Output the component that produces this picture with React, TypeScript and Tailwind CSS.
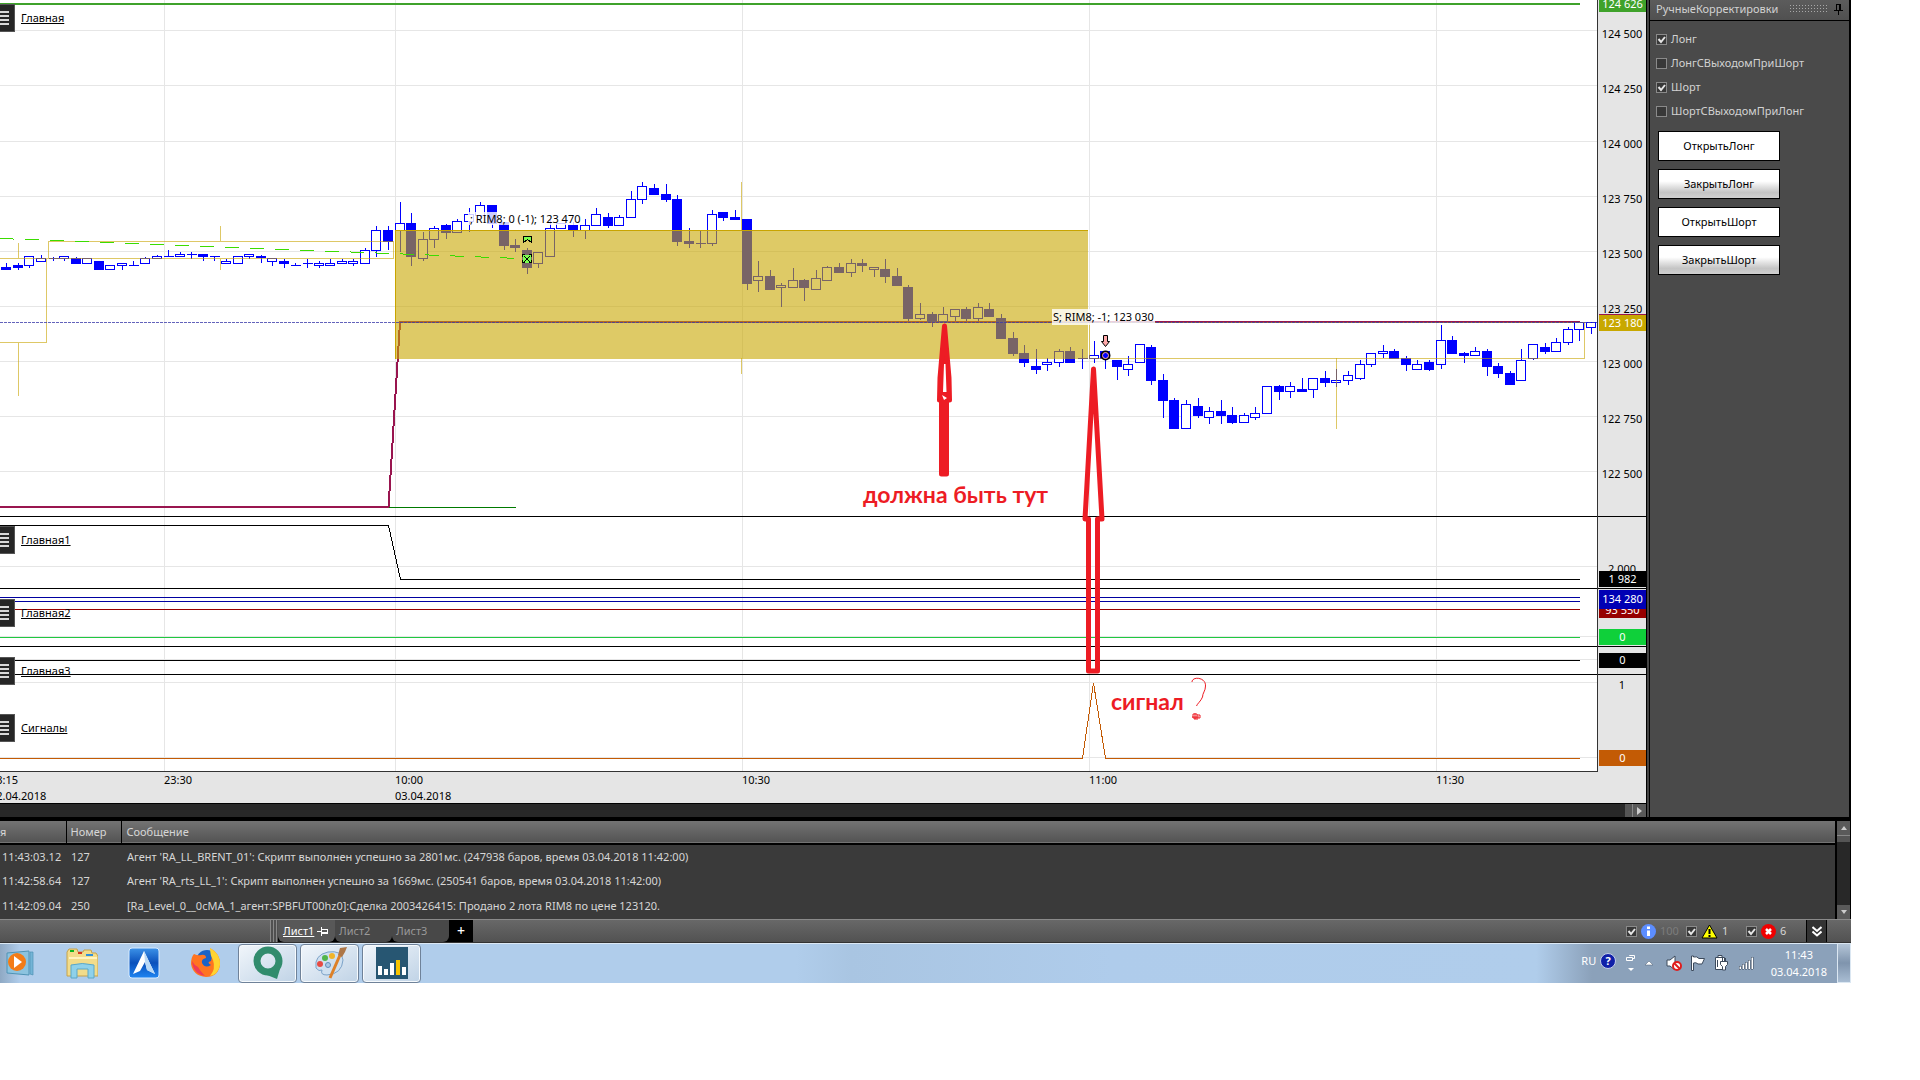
import { useState } from "react"
import type { ReactNode } from "react"
import clsx from "clsx"

// high, body top, body bottom, low, filled
type Candle = [number, number, number, number, number]

const FIRST_INDEX = -35
const STEP = 347 / 30

const candles: Candle[] = [
  [267, 267, 272, 272, 1], [263, 267, 269, 269, 1], [263, 265, 267, 269, 1], [256, 256, 265, 267, 0],
  [255, 258, 261, 261, 0], [257, 258, 258, 260, 0], [256, 256, 258, 260, 0], [257, 258, 263, 263, 1],
  [258, 258, 263, 263, 0], [261, 261, 269, 269, 1], [265, 265, 269, 269, 0], [263, 263, 265, 269, 0],
  [261, 265, 265, 265, 0], [257, 258, 263, 263, 0], [255, 256, 258, 258, 0], [250, 256, 256, 256, 0],
  [252, 254, 256, 256, 0], [252, 254, 254, 258, 0], [254, 254, 256, 260, 1], [256, 256, 256, 260, 0],
  [259, 261, 263, 263, 0], [256, 256, 263, 263, 0], [254, 254, 256, 258, 0], [255, 256, 257, 262, 1],
  [258, 258, 261, 265, 0], [259, 261, 263, 267, 1], [263, 265, 265, 265, 0], [259, 263, 263, 267, 0],
  [261, 263, 265, 267, 0], [259, 263, 265, 265, 0], [259, 261, 263, 263, 0], [259, 261, 263, 265, 0],
  [248, 250, 263, 263, 0], [226, 230, 250, 256, 0], [226, 230, 241, 249, 1],
  [202, 223, 230, 251, 0], [213, 223, 256, 265, 1], [232, 239, 258, 260, 0], [226, 228, 239, 247, 0],
  [224, 225, 232, 238, 1], [219, 221, 232, 232, 0], [208, 214, 221, 231, 0], [202, 205, 215, 215, 0],
  [205, 205, 223, 227, 1], [222, 222, 245, 249, 1], [239, 245, 247, 251, 1], [248, 250, 267, 273, 1],
  [252, 252, 263, 267, 0], [217, 228, 256, 256, 0], [223, 223, 228, 228, 0], [222, 225, 230, 236, 1],
  [219, 225, 230, 238, 0], [208, 214, 225, 225, 0], [213, 217, 225, 227, 1], [215, 217, 225, 225, 0],
  [191, 199, 217, 217, 0], [182, 186, 199, 203, 0], [184, 188, 194, 194, 1], [184, 194, 199, 201, 1],
  [195, 199, 241, 245, 1], [228, 241, 243, 247, 1], [230, 243, 243, 247, 0], [210, 214, 243, 245, 0],
  [212, 212, 217, 220, 1], [210, 217, 219, 219, 1],
  [219, 219, 283, 289, 1], [261, 276, 280, 291, 0], [270, 276, 289, 289, 1], [283, 285, 287, 306, 0],
  [268, 280, 287, 287, 0], [279, 280, 287, 300, 1], [270, 278, 289, 289, 0], [266, 267, 280, 280, 0],
  [263, 267, 272, 272, 1], [259, 263, 272, 276, 0], [259, 263, 265, 271, 1], [267, 267, 269, 276, 0],
  [259, 269, 276, 282, 1], [268, 276, 285, 285, 1], [285, 287, 318, 320, 1], [303, 314, 318, 319, 0],
  [312, 314, 321, 326, 1], [307, 314, 321, 321, 0], [309, 309, 316, 320, 0], [307, 309, 318, 320, 1],
  [303, 307, 318, 320, 0], [303, 309, 316, 316, 1], [314, 318, 338, 338, 1], [332, 338, 353, 355, 1],
  [345, 353, 362, 366, 1], [349, 366, 369, 373, 1], [358, 362, 364, 370, 0], [349, 351, 362, 366, 0],
  [347, 351, 362, 362, 1], [349, 358, 358, 368, 0],
  [341, 355, 358, 362, 0], [351, 351, 358, 368, 1], [360, 360, 366, 379, 1], [356, 364, 369, 375, 0],
  [344, 344, 362, 362, 0], [345, 347, 380, 384, 1], [374, 380, 400, 417, 1], [398, 400, 428, 428, 1],
  [400, 404, 428, 428, 0], [398, 406, 415, 417, 1], [407, 411, 417, 423, 0], [400, 411, 415, 423, 1],
  [407, 415, 422, 423, 1], [413, 415, 422, 422, 0], [407, 413, 417, 419, 0], [386, 386, 413, 413, 0],
  [385, 386, 391, 399, 1], [382, 386, 391, 397, 0], [378, 389, 391, 391, 1], [378, 378, 389, 397, 0],
  [371, 378, 382, 386, 1], [369, 380, 382, 386, 0], [371, 375, 380, 384, 0], [360, 364, 378, 379, 0],
  [353, 353, 364, 366, 0], [345, 351, 353, 357, 0], [349, 351, 358, 358, 1], [356, 358, 364, 370, 1],
  [360, 364, 369, 369, 0], [360, 362, 369, 370, 1],
  [325, 340, 364, 368, 0], [336, 340, 353, 353, 1], [352, 353, 355, 362, 1], [347, 351, 355, 355, 0],
  [349, 351, 366, 375, 1], [363, 366, 373, 377, 1], [371, 373, 384, 384, 1], [349, 360, 380, 380, 0],
  [344, 344, 358, 359, 0], [343, 347, 351, 353, 1], [338, 342, 351, 351, 0], [327, 329, 342, 344, 0],
  [322, 322, 329, 340, 0], [322, 322, 327, 333, 0],
]

const priceTicks = [
  "124 500", "124 250", "124 000", "123 750", "123 500", "123 250", "123 000", "122 750", "122 500",
]

const log = [
  { time: "11:43:03.12", num: 127, text: "Агент 'RA_LL_BRENT_01': Скрипт выполнен успешно за 2801мс. (247938 баров, время 03.04.2018 11:42:00)" },
  { time: "11:42:58.64", num: 127, text: "Агент 'RA_rts_LL_1': Скрипт выполнен успешно за 1669мс. (250541 баров, время 03.04.2018 11:42:00)" },
  { time: "11:42:09.04", num: 250, text: "[Ra_Level_0__0cMA_1_агент:SPBFUT00hz0]:Сделка 2003426415: Продано 2 лота RIM8 по цене 123120." },
]

function Candles() {
  return (
    <g stroke="#0000ff">
      {candles.map(([high, top, bottom, low, filled], i) => {
        const x = Math.floor(400 + (i + FIRST_INDEX) * STEP) + 0.5
        return (
          <g key={i}>
            <path d={`M${x} ${high}V${low + 1}`} />
            {top === bottom ? (
              <path d={`M${x - 5} ${top + 0.5}h10`} />
            ) : (
              <rect x={x - 5} y={top + 0.5} width={9} height={bottom - top} fill={filled ? "#0000ff" : "#fff"} />
            )}
          </g>
        )
      })}
    </g>
  )
}

function ChartCanvas() {
  const priceGrid = [30, 85, 141, 196, 251, 306, 361, 416, 471, 566, 636, 659, 682, 757]
  return (
    <svg
      className="absolute inset-0 h-full w-full"
      viewBox="0 0 1597 771"
      preserveAspectRatio="xMinYMin slice"
      fill="none"
      shapeRendering="crispEdges"
    >
      <g stroke="#e6e6e6">
        {priceGrid.map((y) => (
          <path key={y} d={`M0 ${y + 0.5}H1597`} />
        ))}
        {[164, 395, 742, 1089, 1436].map((x) => (
          <path key={x} d={`M${x}.5 0V771`} />
        ))}
      </g>

      <path d="M0 4H1580" stroke="#3fa22b" strokeWidth={2} />
      <path d="M388 507.5H516" stroke="#007a00" />
      <path d="M0 507H388.5L400 322H1580" stroke="#99154f" strokeWidth={2} />
      <Candles />

      {/* higher timeframe bars */}
      <g stroke="#c8a400" strokeOpacity={0.6}>
        <path d="M0 258.5H393.5V241.5H48.5V258.5M46.5 258.5V342.5H0" />
        <path d="M18.5 243V258M18.5 343V396M220.5 226V241M220.5 259V270" />
        <path d="M741.5 182V231M741.5 358V374M1336.5 358V429" />
        <path d="M1089.5 322.5V358.5H1584.5V322.5H1089" />
      </g>
      <rect x={395} y={230} width={693} height={129} fill="#c8a700" fillOpacity={0.6} />
      <path d="M395.5 359V230.5H1088" stroke="#c8a400" />

      <path d="M0 322.5H1597" stroke="#3c3caa" strokeOpacity={0.8} strokeDasharray="3 1" />
      <path d="M0 238.5L520 258.5" stroke="#3bdc00" strokeDasharray="14 11" />

      {/* indicator panes */}
      <path d="M0 525.5H388.5L400.5 579.5H1580M0 660.5H1580" stroke="#000" />
      <path d="M0 597.5H1580M0 601.5H1580" stroke="#0000a0" />
      <path d="M0 609.5H1580" stroke="#960000" />
      <path d="M0 637.5H1580" stroke="#1fc840" />
      <path d="M0 758.5H1082.5L1093.5 683L1105.5 758.5H1580" stroke="#c35b05" />

      {/* trade markers */}
      <path d="M523.5 242.5V236.5H531.5V242.5L527.5 239.5Z" fill="#7dff50" stroke="#000" />
      <rect x={523} y={255} width={8} height={8} fill="#7dff50" />
      <path d="M522.5 257V254.5H525M529 254.5H531.5V257M531.5 260V262.5H529M525 262.5H522.5V260" stroke="#000" />
      <path d="M524 256L530 262M530 256L524 262" stroke="#000" />
      <g shapeRendering="auto">
        <path d="M1103.5 335.5H1107.5V341.5H1109.5L1105.5 346.5L1101.5 341.5H1103.5Z" fill="#ffaaaa" stroke="#000" />
        <circle cx={1105.5} cy={355.5} r={4} stroke="#000" strokeWidth={2} />
        <circle cx={1105.5} cy={355.5} r={3} stroke="#ffaaaa" />
      </g>
    </svg>
  )
}

function Annotations() {
  return (
    <svg
      className="pointer-events-none absolute inset-0 h-full w-full"
      viewBox="0 0 1597 771"
      preserveAspectRatio="xMinYMin slice"
      fill="none"
      stroke="#ed1c24"
      strokeLinejoin="round"
    >
      <path d="M944.5 326L940 378L939.5 400H949.5L949 378ZM941.5 402H946.5V474H941.5Z" fill="#ed1c24" strokeWidth={5} />
      <path d="M944 364L943 392H946.5L945.5 364ZM942 395L947 398L944 400Z" fill="#fff" stroke="none" />
      <path d="M1093.5 369L1085 519H1088.5V671H1097.5V519H1102Z" strokeWidth={5} />
      <path d="M1192 682C1192 676 1206 677 1205.500 686C1205.500 691 1202.500 693 1202.500 697C1201 701 1197 704 1196.500 706" />
      <path d="M1193 714H1197V718H1193ZM1195 713V719M1192 717H1199M1197 715H1200V718H1197M1194 719H1198" />
      <g fill="#ed1c24" stroke="none" className="font-['Lato','Open_Sans',sans-serif] text-[23px] font-bold">
        <text x={863} y={503}>должна быть тут</text>
        <text x={1111} y={710}>сигнал</text>
      </g>
    </svg>
  )
}

function Pane({ title, className }: { title: string; className: string }) {
  return (
    <div className={clsx("relative flex items-start border-b border-black", className)}>
      <button aria-label={`Меню ${title}`} className="flex h-7 w-[15px] shrink-0 flex-col justify-center gap-[2px] border border-l-0 border-[#555] bg-[#262626]">
        <span className="h-[2px] w-[9px] bg-[#d8d8d8]" />
        <span className="h-[2px] w-[9px] bg-[#d8d8d8]" />
        <span className="h-[2px] w-[9px] bg-[#d8d8d8]" />
        <span className="h-[2px] w-[9px] bg-[#d8d8d8]" />
      </button>
      <a href="#" className="ml-1.5 leading-7 text-black underline">{title}</a>
    </div>
  )
}

function AxisTag({ className, children }: { className: string; children: ReactNode }) {
  return <div className={clsx("absolute inset-x-0 ml-px flex items-center justify-center overflow-hidden text-white", className)}>{children}</div>
}

function Check({ label, on, className, children }: { label: string; on: boolean; className?: string; children?: ReactNode }) {
  const [checked, setChecked] = useState(on)
  return (
    <label className={clsx("flex items-center", className)}>
      <span className="relative flex">
        <input
          type="checkbox"
          aria-label={label}
          checked={checked}
          onChange={(e) => setChecked(e.target.checked)}
          className="h-[11px] w-[11px] appearance-none border border-[#8a8a8a] bg-[#383838]"
        />
        {checked && (
          <svg className="pointer-events-none absolute inset-0" width="11" height="11" fill="none" stroke="#e6e6e6" strokeWidth="2">
            <path d="M2.500 5L5 8L9 3" />
          </svg>
        )}
      </span>
      {children}
    </label>
  )
}

function Pin({ className }: { className?: string }) {
  return (
    <svg className={className} width="9" height="11" fill="none" stroke="currentColor" shapeRendering="crispEdges">
      <path d="M2.500 6V0.500H6.500V6M5.500 1V6M0 6.500H9M4.500 7V11" />
    </svg>
  )
}

function SidePanel() {
  return (
    <aside className="flex w-[201px] shrink-0 flex-col border-r-2 border-black bg-[#4a4a4a] text-[#d2d2d2]">
      <header className="flex h-[21px] items-center border-b border-black bg-linear-to-b from-[#5c5c5c] to-[#505050] pb-0.5 pl-1.5">
        <span>РучныеКорректировки</span>
        <svg className="mr-1.5 ml-auto" width="38" height="8" shapeRendering="crispEdges">
          <path d="M0 .5H38M0 3.500H38M0 6.500H38" stroke="#a8a8a8" strokeDasharray="1 2" />
        </svg>
        <Pin className="mr-1.5 text-black" />
      </header>
      <div className="flex flex-col pt-1.5 pl-1.5">
        <Check on label="Лонг" className="h-6 gap-1"><span>Лонг</span></Check>
        <Check on={false} label="ЛонгСВыходомПриШорт" className="h-6 gap-1"><span>ЛонгСВыходомПриШорт</span></Check>
        <Check on label="Шорт" className="h-6 gap-1"><span>Шорт</span></Check>
        <Check on={false} label="ШортСВыходомПриЛонг" className="h-6 gap-1"><span>ШортСВыходомПриЛонг</span></Check>
      </div>
      <div className="flex flex-col items-start gap-2 pt-2 pl-2 text-black">
        <button className="h-[30px] w-[122px] border border-black bg-white">ОткрытьЛонг</button>
        <button className="h-[30px] w-[122px] border border-black bg-linear-to-b from-white from-40% via-[#c4c4c4] via-80% to-[#d0d0d0]">ЗакрытьЛонг</button>
        <button className="h-[30px] w-[122px] border border-black bg-white">ОткрытьШорт</button>
        <button className="h-[30px] w-[122px] border border-black bg-linear-to-b from-white from-40% via-[#c4c4c4] via-80% to-[#d0d0d0]">ЗакрытьШорт</button>
      </div>
    </aside>
  )
}

function Chart() {
  return (
    <div className="flex min-w-0 flex-1 flex-col bg-[#e5e5e5]">
      <div className="flex">
        <div className="relative min-w-0 flex-1 border-r border-b border-[#333] bg-white">
          <ChartCanvas />
          <Pane title="Главная" className="h-[517px] pt-1" />
          <Pane title="Главная1" className="h-[72px] pt-[9px]" />
          <Pane title="Главная2" className="h-[58px] pt-[10px]" />
          <Pane title="Главная3" className="h-[28px] pt-[10px]" />
          <Pane title="Сигналы" className="h-[96px] border-b-0 pt-[39px]" />
          <span className="absolute top-[212px] left-[468px] bg-white/80 px-0.5 leading-[13px] whitespace-nowrap text-black">; RIM8; 0 (-1); 123 470</span>
          <span className="absolute top-[309px] left-[1052px] bg-white/80 px-px leading-4 whitespace-nowrap text-black">S; RIM8; -1; 123 030</span>
          <Annotations />
        </div>

        {/* value axis */}
        <div className="w-[48px] shrink-0 text-center text-black">
          <div className="relative h-[517px] border-b border-black pt-[6px]">
            {priceTicks.map((tick) => (
              <div key={tick} className="h-[55px] leading-[55px]">{tick}</div>
            ))}
            <AxisTag className="-top-1 h-4 bg-[#3fa22b]">124 626</AxisTag>
            <AxisTag className="top-[314px] h-[17px] border-t border-[#99154f] bg-[#c8a800]">123 180</AxisTag>
          </div>
          <div className="relative h-[72px] border-b border-black pt-11">
            <div className="leading-4">2 000</div>
            <AxisTag className="top-[54px] h-4 bg-black">1 982</AxisTag>
          </div>
          <div className="relative h-[58px] border-b border-black">
            <AxisTag className="top-[13px] h-4 bg-[#960000]">93 550</AxisTag>
            <AxisTag className="top-px h-[19px] bg-[#0000b4]">134 280</AxisTag>
            <AxisTag className="top-10 h-4 bg-[#0fd03a]">0</AxisTag>
          </div>
          <div className="relative h-[28px] border-b border-black">
            <AxisTag className="top-1.5 h-[15px] bg-black">0</AxisTag>
          </div>
          <div className="relative h-[97px] pt-0.5">
            <div className="leading-4">1</div>
            <AxisTag className="top-[75px] h-4 bg-[#c35b05]">0</AxisTag>
          </div>
        </div>
      </div>

      {/* time axis */}
      <div className="flex h-[31px] overflow-hidden leading-4 text-black">
        <div className="w-[164px] shrink-0"><div className="-ml-2.5">23:15<br />02.04.2018</div></div>
        <div className="w-[231px] shrink-0">23:30</div>
        <div className="w-[347px] shrink-0">10:00<br />03.04.2018</div>
        <div className="w-[347px] shrink-0">10:30</div>
        <div className="w-[347px] shrink-0">11:00</div>
        <div>11:30</div>
      </div>

      <div className="flex h-3.5 justify-end border-t border-black bg-[#282828]">
        <div className="w-2 border-r border-[#888] bg-[#555]" />
        <button aria-label="Вправо" className="flex w-[13px] items-center justify-center bg-[#5a5a5a]">
          <svg width="5" height="8" fill="#ccc"><path d="M0 0L5 4L0 8Z" /></svg>
        </button>
      </div>
    </div>
  )
}

function MessageLog() {
  return (
    <div className="flex border-t-4 border-r border-black bg-[#3a3a3a] text-[#d6d6d6]">
      <table className="min-w-0 flex-1 table-fixed border-collapse text-left">
        <thead>
          <tr className="h-[23px] border-b-2 border-black bg-linear-to-b from-[#737373] to-[#545454]">
            <th className="w-[66px] border-r border-black p-0 font-normal">я</th>
            <th className="w-[55px] border-r border-black p-0 pl-1 font-normal">Номер</th>
            <th className="p-0 pl-[5px] font-normal">Сообщение</th>
          </tr>
        </thead>
        <tbody>
          {log.map((row) => (
            <tr key={row.time} className="h-[25px]">
              <td className="p-0 pl-0.5 whitespace-nowrap">{row.time}</td>
              <td className="p-0 pl-[5px]">{row.num}</td>
              <td className="p-0 pl-1.5">{row.text}</td>
            </tr>
          ))}
        </tbody>
      </table>
      <div className="flex w-[15px] shrink-0 flex-col border-l-2 border-black bg-[#282828]">
        <button aria-label="Вверх" className="flex h-3.5 items-center justify-center bg-[#5a5a5a]">
          <svg width="6" height="4" fill="#ccc"><path d="M0 4L3 0L6 4Z" /></svg>
        </button>
        <div className="h-[7px] border-t border-[#888] bg-[#555]" />
        <button aria-label="Вниз" className="mt-auto flex h-3.5 items-center justify-center bg-[#5a5a5a]">
          <svg width="6" height="4" fill="#ccc"><path d="M0 0L3 4L6 0Z" /></svg>
        </button>
      </div>
    </div>
  )
}

function SheetBar() {
  return (
    <div className="flex h-6 items-stretch border-t border-b border-t-[#8a8a8a] border-b-[#333] bg-linear-to-b from-[#686868] to-[#525252]">
      <div className="ml-[270px] w-2 bg-[repeating-linear-gradient(90deg,#888_0_1px,#505050_1px_3px)]" />
      <nav className="flex bg-black">
        <button className="flex w-[57px] items-center gap-1 rounded-b-md bg-[#585858] pl-[5px] text-white">
          <span className="underline">Лист1</span>
          <Pin className="rotate-90" />
        </button>
        <button className="w-[57px] rounded-b-md bg-[#484848] pl-1 text-left text-[#9a9a9a]">Лист2</button>
        <button className="w-[57px] rounded-b-md bg-[#484848] pl-1 text-left text-[#9a9a9a]">Лист3</button>
        <button className="w-6 bg-black text-sm leading-none font-medium text-white">+</button>
      </nav>
      <div className="ml-auto flex items-center text-[#d6d6d6]">
        <Check on label="Информация" className="w-[60px] gap-1">
          <svg width="15" height="15"><circle cx="7.500" cy="7.500" r="7.500" fill="#5c8dff" /><path d="M7.500 2.500V5M7.500 6.500V12" stroke="#fff" strokeWidth="3" /></svg>
          <span className="text-[#7c7c7c]">100</span>
        </Check>
        <Check on label="Предупреждения" className="w-[60px] gap-1">
          <svg width="17" height="15"><path d="M8.500 1L16 14H1Z" fill="#ffff00" stroke="#000" /><path d="M8.500 5V10M8.500 11V13" stroke="#000" strokeWidth="2" /></svg>
          <span>1</span>
        </Check>
        <Check on label="Ошибки" className="w-[60px] gap-1">
          <svg width="15" height="15"><circle cx="7.500" cy="7.500" r="7.500" fill="#f00000" /><path d="M5 5L10 10M10 5L5 10" stroke="#fff" strokeWidth="2.500" /></svg>
          <span>6</span>
        </Check>
      </div>
      <button aria-label="Свернуть" className="mr-6 flex w-[21px] items-center justify-center border-x border-black bg-[#333]">
        <svg width="10" height="11" fill="none" stroke="#fff" strokeWidth="2"><path d="M.5 1L5 5L9.500 1M.5 5.500L5 9.500L9.500 5.500" /></svg>
      </button>
    </div>
  )
}

function Taskbar() {
  const open = "flex h-[39px] w-[59px] items-center justify-center rounded-sm border border-[#6f8299] bg-linear-to-br from-[#f1f6fb] to-[#c0d3e6] shadow-[inset_0_0_0_1px_#f6fafd]"
  return (
    <footer className="flex h-10 items-center bg-[linear-gradient(90deg,#8fa9c4_0,#b0cdeb_20px,#b0cdeb_43%,#a9c5e2_46%,#afcceb_60%,#b0cdeb_83%,#8ba1ba_86%)] text-white shadow-[inset_0_1px_0_#dce9f5]">
      <div className="flex flex-1 items-center">
        <button aria-label="Проигрыватель" className="ml-1 flex w-8 justify-center">
          <svg width="32" height="32">
            <path d="M3 6L25 4V28L3 26Z" fill="#8cc3df" stroke="#4f93b5" />
            <path d="M26 5H29V28L26 27Z" fill="#73b4d6" stroke="#4f93b5" strokeWidth=".7" />
            <circle cx="13" cy="15" r="9" fill="#f37c17" />
            <path d="M10 9L18 15L10 21Z" fill="#fff" />
          </svg>
        </button>
        <button aria-label="Проводник" className="ml-[30px]">
          <svg width="32" height="32">
            <path d="M1 5L3 2H11L12 5H17L18 3H25L26 6H30L32 9V29H1Z" fill="#f2dc8b" stroke="#c6a24a" />
            <path d="M4 4H8" stroke="#0eb51d" strokeWidth="2" /><path d="M12 6H16" stroke="#d8361c" strokeWidth="2" /><path d="M20 8H27" stroke="#2d8fdc" strokeWidth="2" />
            <path d="M3 11H31" stroke="#fff3bf" strokeWidth="2" />
            <path d="M5 31V18Q16 15 28 18V31H22V22H11V31Z" fill="#8fd1ea" stroke="#5aa7c8" />
          </svg>
        </button>
        <button aria-label="Навигатор" className="ml-[30px]">
          <svg width="32" height="32">
            <defs><linearGradient id="nav" x2="0" y2="1"><stop stopColor="#3c92e8" /><stop offset=".5" stopColor="#0b50bb" /><stop offset="1" stopColor="#1f86f2" /></linearGradient></defs>
            <rect x="1" y="1" width="30" height="30" rx="3" fill="url(#nav)" stroke="#d7ebff" />
            <path d="M16 4L27 27L19 23L17 15L12 24L5 27Z" fill="#fff" /><path d="M17 15L19 23L27 27L16 4Z" fill="#b9d9f6" />
          </svg>
        </button>
        <button aria-label="Firefox" className="ml-[30px]">
          <svg width="32" height="32">
            <circle cx="17" cy="14" r="11" fill="#1b63c6" />
            <path d="M4 7Q8 9 11 8Q16 7 16 11Q11 12 12 16Q15 22 21 18Q16 15 21 14Q23 7 20 1Q31 7 30 18Q28 30 16 30Q3 29 1 17Q1 10 4 7Z" fill="#ff7420" />
            <path d="M20 1Q31 7 30 18Q28 28 20 29Q26 22 23 13Q20 8 20 1Z" fill="#ffd431" />
            <path d="M2 14Q3 27 15 29Q10 24 8 20Q4 18 2 14Z" fill="#ef3b56" />
          </svg>
        </button>
        <div className="ml-4 flex gap-[3px]">
          <button aria-label="QUIK" className={open}>
            <svg width="32" height="34">
              <circle cx="16" cy="15" r="11" fill="none" stroke="#318c6d" strokeWidth="7" /><path d="M15 24L28 23L25 33Q20 31 15 29Z" fill="#318c6d" />
            </svg>
          </button>
          <button aria-label="Paint" className={open}>
            <svg width="34" height="34">
              <path d="M3 22Q1 9 15 6Q29 4 30 14Q29 28 14 29Q7 29 9 24Q6 26 3 22Z" fill="#cfe0f0" stroke="#7ba2c8" />
              <circle cx="7" cy="18" r="3" fill="#e74b43" /><circle cx="12" cy="12" r="3" fill="#52b54b" /><circle cx="19" cy="10" r="3" fill="#f0b429" /><circle cx="15" cy="19" r="2.500" fill="#a9c8e6" stroke="#5f8ebd" />
              <path d="M27 9L17 32" stroke="#dd8129" strokeWidth="3" /><path d="M25 9L27 2L34 1L32 6L29 11Z" fill="#ad7748" />
            </svg>
          </button>
          <button aria-label="Графики" className={open}>
            <svg width="32" height="32" shapeRendering="crispEdges">
              <path d="M0 0H32V32H0Z" fill="#275672" /><path d="M2 19H6V28H2ZM8 22H12V28H8ZM14 16H18V28H14ZM26 20H30V28H26Z" fill="#fff" /><path d="M20 13H24V28H20Z" fill="#f8c400" />
            </svg>
          </button>
        </div>
      </div>

      <div className="flex items-center">
        <button className="-mt-1 w-[22px]">RU</button>
        <svg className="-mt-1" width="16" height="16"><circle cx="8" cy="8" r="7.500" fill="#1020a8" stroke="#c6cfe8" /><text x="8" y="12" textAnchor="middle" fill="#fff" className="font-bold">?</text></svg>
        <svg className="ml-2.5" width="10" height="20" fill="none" stroke="#fff"><path d="M3.500 3V2.500H8.500V5.500H7M.5 4.500H6.500V7.500H.5Z" /><path d="M2 15H8L5 18Z" fill="#fff" stroke="none" /></svg>
        <svg className="ml-2" width="10" height="6"><path d="M1 5L5 1L9 5Z" fill="#fff" stroke="#4d5e73" strokeWidth=".5" /></svg>
        <svg className="ml-3" width="16" height="16"><path d="M1 5H4L9 1V15L4 11H1Z" fill="#fff" stroke="#3c4a5c" /><circle cx="11" cy="11" r="4" fill="#fff" stroke="#e01e1e" strokeWidth="2" /><path d="M8 8L14 14" stroke="#e01e1e" strokeWidth="2" /></svg>
        <svg className="ml-2" width="16" height="16"><path d="M1.500 1H3.500V2Q7 1 9 3.500H14.500L12 9H8Q6 7 3.500 8V15.500H1.500Z" fill="#fff" stroke="#3c4a5c" /></svg>
        <svg className="ml-2" width="16" height="16"><path d="M1.500 2.500H10.500V14.500H1.500ZM4 .5H8V2.500H4Z" fill="#fff" stroke="#3c4a5c" /><path d="M3.500 5V12" stroke="#3c4a5c" /><path d="M6.500 6.500H13.500V9.500L11.500 11.500V15H8.500V11.500L6.500 9.500ZM8.500 3V6M11.500 3V6" fill="#fff" stroke="#3c4a5c" /></svg>
        <svg className="ml-2" width="17" height="14" fill="#fff" stroke="#3c4a5c" strokeWidth=".5" shapeRendering="crispEdges"><path d="M1 10H3V13H1ZM4 8H6V13H4ZM7 6H9V13H7ZM10 4H12V13H10ZM13 1H15V13H13Z" /></svg>
        <div className="mr-2.5 ml-4 text-center leading-[17px]">11:43<br />03.04.2018</div>
        <button aria-label="Свернуть все окна" className="h-10 w-3.5 border border-[#dbe7f2] bg-linear-to-b from-[#b5c6d8] via-[#7f94ad] to-[#a9bdd3]" />
      </div>
    </footer>
  )
}

export default function App() {
  return (
    <div className="min-h-screen bg-white pr-[69px] font-['Noto_Sans','Open_Sans',sans-serif] text-[11px]">
      <main className="flex">
        <Chart />
        <div className="w-1 shrink-0 border-x border-black bg-[#444]" />
        <SidePanel />
      </main>
      <MessageLog />
      <SheetBar />
      <Taskbar />
    </div>
  )
}
